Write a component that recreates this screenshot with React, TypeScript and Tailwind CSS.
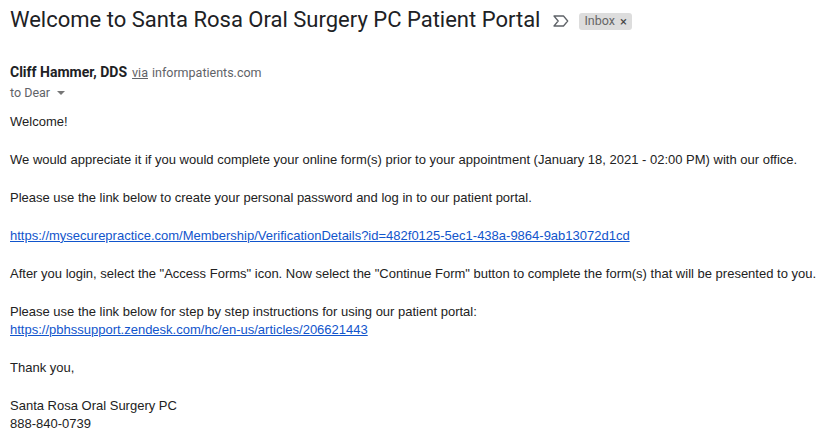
import { ReactNode } from 'react'

// Gmail-style open message: subject header, sender line, plain body.
const BODY = "font-['Liberation_Sans',Arial,sans-serif] text-[13px] leading-[18px] text-[#222222]"

function Para({ children, first }: { children: ReactNode; first?: boolean }) {
  return <div className={first ? '' : 'mt-[20px]'}>{children}</div>
}

function Link({ children }: { children: string }) {
  return (
    <a href="#" className="text-[#1155cc] underline">
      {children}
    </a>
  )
}

export default function App() {
  return (
    <div className="h-[443px] w-[827px] overflow-hidden bg-white pl-[10px]">
      <div className="flex items-center pt-[8px]">
        <h1 className="font-['Roboto',sans-serif] text-[22px] font-normal leading-[24px] text-[#202124]">
          Welcome to Santa Rosa Oral Surgery PC Patient Portal
        </h1>
        <svg
          width="16"
          height="12"
          viewBox="0 0 16 12"
          fill="none"
          stroke="#5f6368"
          strokeWidth="1.3"
          strokeLinejoin="round"
          className="ml-[13px] mt-[2px]"
          aria-hidden="true"
        >
          <path d="M1 1h9.5l4.2 5-4.2 5H1l4.2-5z" />
        </svg>
        <span className="ml-[10px] mt-[2px] flex h-[17px] items-center rounded-[3px] bg-[#dddddd] px-[5px] font-['Roboto',sans-serif] text-[12.5px] text-[#666666]">
          Inbox
          <span className="ml-[5px] text-[13px] leading-none text-[#444]">×</span>
        </span>
      </div>

      <div className="mt-[30px] font-['Roboto',sans-serif]">
        <div className="flex items-baseline">
          <span className="text-[14px] font-bold text-[#202124]">Cliff Hammer, DDS</span>
          <span className="ml-[5px] text-[12.5px] text-[#5f6368] underline">via</span>
          <span className="ml-[4px] text-[12.5px] text-[#5f6368]">informpatients.com</span>
        </div>
        <div className="mt-[1px] flex items-center text-[12.5px] text-[#5f6368]">
          to Dear
          <svg width="8" height="4" viewBox="0 0 8 4" className="ml-[7px]" aria-hidden="true">
            <path d="M0 0h8L4 4z" fill="#777" />
          </svg>
        </div>
      </div>

      <div className={`mt-[10px] ${BODY}`}>
        <Para first>Welcome!</Para>
        <Para>
          We would appreciate it if you would complete your online form(s) prior to your appointment
          (January 18, 2021 - 02:00 PM) with our office.
        </Para>
        <Para>Please use the link below to create your personal password and log in to our patient portal.</Para>
        <Para>
          <Link>https://mysecurepractice.com/Membership/VerificationDetails?id=482f0125-5ec1-438a-9864-9ab13072d1cd</Link>
        </Para>
        <Para>
          After you login, select the "Access Forms" icon. Now select the "Continue Form" button to complete the
          form(s) that will be presented to you.
        </Para>
        <Para>
          Please use the link below for step by step instructions for using our patient portal:
          <br />
          <Link>https://pbhssupport.zendesk.com/hc/en-us/articles/206621443</Link>
        </Para>
        <Para>Thank you,</Para>
        <Para>
          Santa Rosa Oral Surgery PC
          <br />
          888-840-0739
        </Para>
      </div>
    </div>
  )
}
